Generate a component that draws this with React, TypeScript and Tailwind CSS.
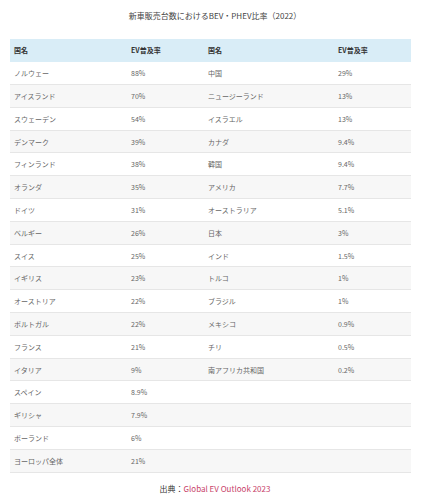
const ROWS: [string, string, string, string][] = [
  ['ノルウェー', '88%', '中国', '29%'],
  ['アイスランド', '70%', 'ニュージーランド', '13%'],
  ['スウェーデン', '54%', 'イスラエル', '13%'],
  ['デンマーク', '39%', 'カナダ', '9.4%'],
  ['フィンランド', '38%', '韓国', '9.4%'],
  ['オランダ', '35%', 'アメリカ', '7.7%'],
  ['ドイツ', '31%', 'オーストラリア', '5.1%'],
  ['ベルギー', '26%', '日本', '3%'],
  ['スイス', '25%', 'インド', '1.5%'],
  ['イギリス', '23%', 'トルコ', '1%'],
  ['オーストリア', '22%', 'ブラジル', '1%'],
  ['ポルトガル', '22%', 'メキシコ', '0.9%'],
  ['フランス', '21%', 'チリ', '0.5%'],
  ['イタリア', '9%', '南アフリカ共和国', '0.2%'],
  ['スペイン', '8.9%', '', ''],
  ['ギリシャ', '7.9%', '', ''],
  ['ポーランド', '6%', '', ''],
  ['ヨーロッパ全体', '21%', '', ''],
];

export default function App() {
  return (
    <div
      className="w-[430px] h-[500px] bg-white overflow-hidden"
      style={{ fontFamily: '"Noto Sans CJK JP", "Noto Sans", sans-serif' }}
    >
      <p className="pt-[11px] mb-[18px] text-center text-[8px] leading-[10px] text-[#444]">
        新車販売台数におけるBEV・PHEV比率（2022）
      </p>

      <table className="ml-[10px] w-[401px] table-fixed border-collapse text-[7px] leading-[10px]">
        <colgroup>
          <col className="w-[117px]" />
          <col className="w-[77px]" />
          <col className="w-[130px]" />
          <col className="w-[77px]" />
        </colgroup>
        <thead>
          <tr className="h-[22.8px] bg-[#d9edf7] text-left text-[#333]">
            <th className="pl-[4px] font-bold">国名</th>
            <th className="pl-[4px] font-bold">EV普及率</th>
            <th className="pl-[4px] font-bold">国名</th>
            <th className="pl-[4px] font-bold">EV普及率</th>
          </tr>
        </thead>
        <tbody className="text-[#666]">
          {ROWS.map((r, i) => (
            <tr
              key={i}
              className={`h-[22.8px] border-b border-[#e6e6e6] ${i % 2 === 1 ? 'bg-[#f7f7f7]' : 'bg-white'}`}
            >
              {r.map((c, j) => (
                <td key={j} className="pl-[4px]">{c}</td>
              ))}
            </tr>
          ))}
        </tbody>
      </table>

      <p className="mt-[10px] text-center text-[8px] leading-[12px] text-[#333]">
        出典：<span className="text-[#c8436a]">Global EV Outlook 2023</span>
      </p>
    </div>
  );
}
